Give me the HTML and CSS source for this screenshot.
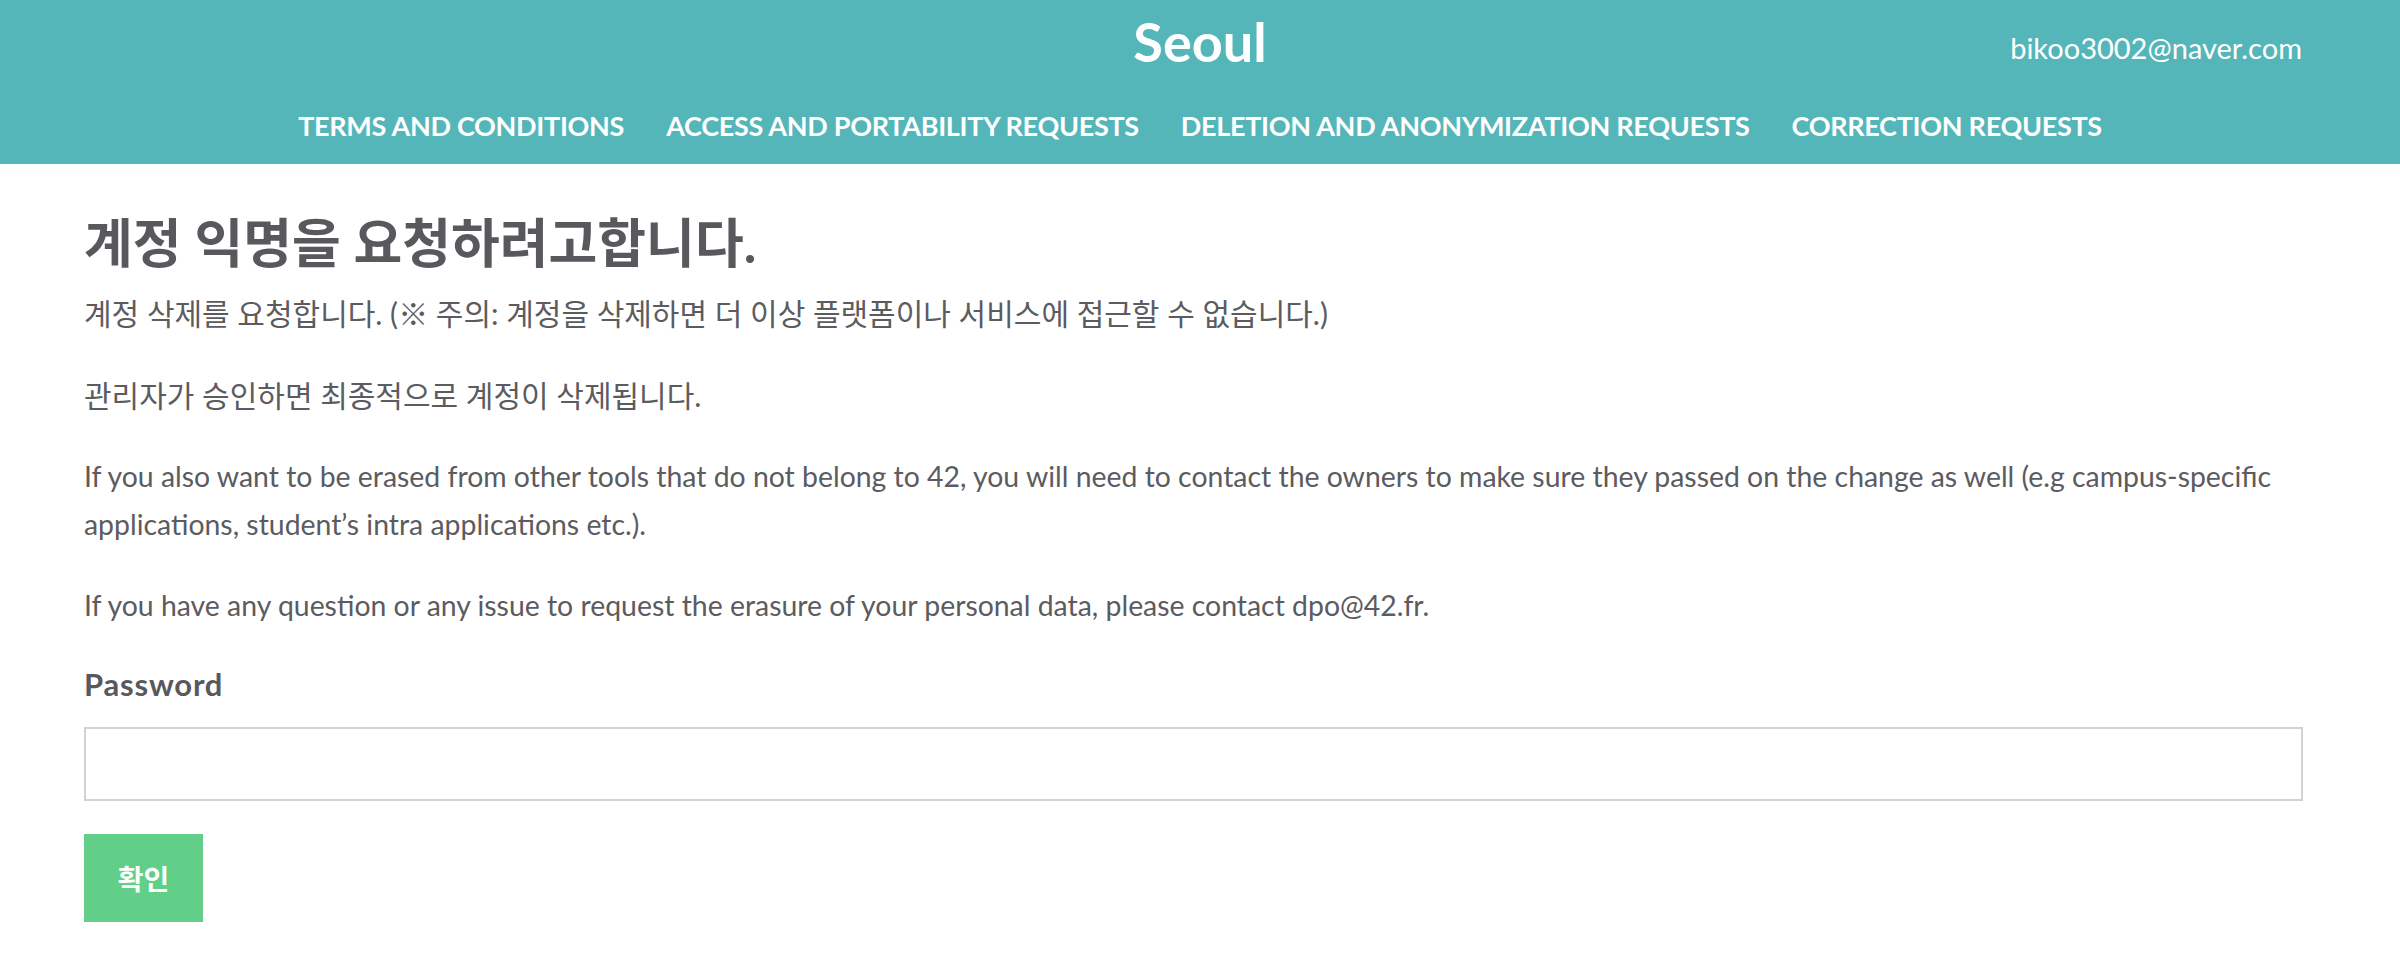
FILE: index.html
```html
<!DOCTYPE html>
<html lang="ko">
<head>
<meta charset="utf-8">
<title>Seoul</title>
<link rel="stylesheet" href="styles.css">
</head>
<body>
<header class="site-header">
  <div class="top-row">
    <div class="spacer"></div>
    <div class="brand">Seoul</div>
    <div class="user-email">bikoo3002@naver.com</div>
  </div>
  <nav class="main-nav">
    <a class="nav-link" href="#">TERMS AND CONDITIONS</a>
    <a class="nav-link" href="#">ACCESS AND PORTABILITY REQUESTS</a>
    <a class="nav-link" href="#">DELETION AND ANONYMIZATION REQUESTS</a>
    <a class="nav-link" href="#">CORRECTION REQUESTS</a>
  </nav>
</header>
<main class="content">
  <h1 class="page-title">계정 익명을 요청하려고합니다.</h1>
  <p class="text text-ko">계정 삭제를 요청합니다. (※ 주의: 계정을 삭제하면 더 이상 플랫폼이나 서비스에 접근할 수 없습니다.)</p>
  <p class="text text-ko">관리자가 승인하면 최종적으로 계정이 삭제됩니다.</p>
  <p class="text text-en">If you also want to be erased from other tools that do not belong to 42, you will need to contact the owners to make sure they passed on the change as well (e.g campus-specific applications, student’s intra applications etc.).</p>
  <p class="text text-en">If you have any question or any issue to request the erasure of your personal data, please contact dpo@42.fr.</p>
  <form class="form">
    <label class="field-label" for="pw">Password</label>
    <input class="field-input" id="pw" type="password">
    <button class="submit-btn" type="button">확인</button>
  </form>
</main>
</body>
</html>
```
FILE: styles.css
```css
* { box-sizing: border-box; }
html, body { margin: 0; padding: 0; }
body {
  font-family: "Lato", "Noto Sans CJK KR", sans-serif;
  color: #5b5b60;
  background: #ffffff;
}
.site-header {
  background: #55b6b9;
  height: 164px;
  color: #ffffff;
}
.top-row {
  display: grid;
  grid-template-columns: 1fr auto 1fr;
  align-items: start;
  height: 83px;
}
.brand {
  font-size: 54px;
  font-weight: 700;
  line-height: 83px;
  text-align: center;
}
.user-email {
  font-size: 29px;
  line-height: 40px;
  margin-top: 28px;
  text-align: right;
  padding-right: 98px;
}
.main-nav {
  display: flex;
  justify-content: center;
  gap: 42px;
  margin-top: 23px;
}
.nav-link {
  color: #ffffff;
  text-decoration: none;
  font-size: 27px;
  font-weight: 700;
  letter-spacing: -0.3px;
  line-height: 40px;
}
.content {
  padding: 48px 97px 0 84px;
}
.page-title {
  margin: 0 0 16px;
  font-size: 53px;
  line-height: 62px;
  font-weight: 700;
  color: #58585d;
}
.text {
  margin: 0 0 34px;
  font-size: 28.4px;
  line-height: 47.5px;
}
.text-ko {
  font-size: 30px;
}
.form {
  display: flex;
  flex-direction: column;
  align-items: flex-start;
}
.field-label {
  font-size: 31px;
  font-weight: 700;
  letter-spacing: 0.8px;
  line-height: 40px;
  color: #58585d;
}
.field-input {
  margin-top: 23px;
  width: 100%;
  height: 74px;
  border: 2px solid #cfd4d8;
  border-radius: 0;
  background: #fff;
  outline: none;
}
.submit-btn {
  margin-top: 33px;
  width: 119px;
  height: 88px;
  border: none;
  border-radius: 0;
  background: #62cf88;
  color: #ffffff;
  font-family: "Noto Sans CJK KR", sans-serif;
  font-size: 28px;
  font-weight: 700;
  padding: 0;
}
```
